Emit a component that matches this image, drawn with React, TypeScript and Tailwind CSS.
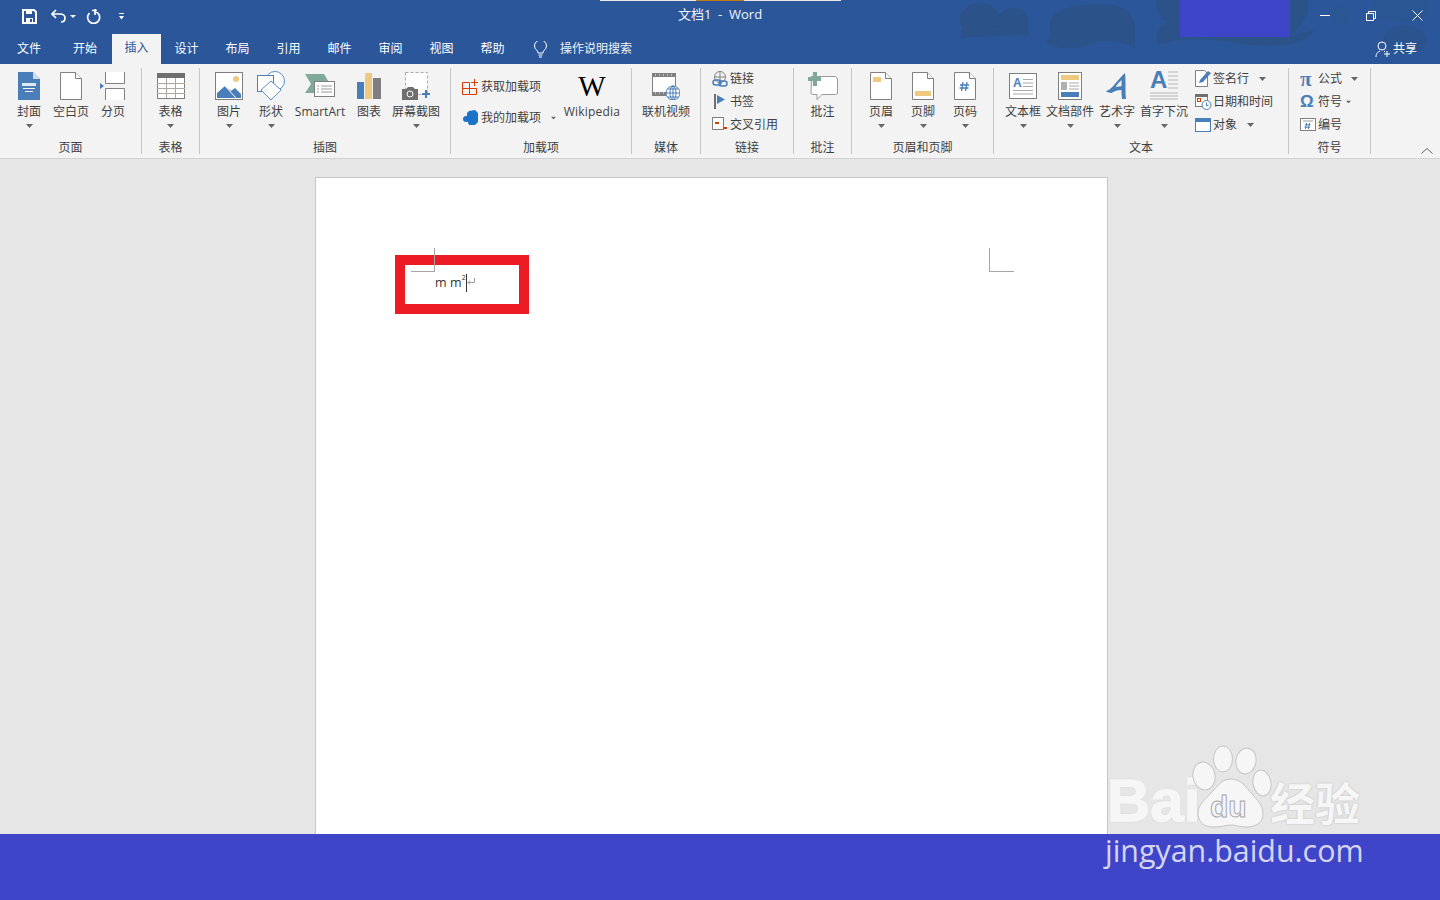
import type { ReactNode } from 'react';

const font = { fontFamily: '"Open Sans", "Noto Sans CJK SC", sans-serif' };

function Caret({ className = '' }: { className?: string }) {
  return (
    <svg width="7" height="4" viewBox="0 0 7 4" className={className}>
      <path d="M0 0h7L3.5 4z" fill="#666" />
    </svg>
  );
}

function Big({ w, icon, label, caret = true }: { w: string; icon: ReactNode; label: string; caret?: boolean }) {
  return (
    <div className={`${w} flex flex-col items-center shrink-0`}>
      <div className="h-[34px] mt-[5px] flex items-center justify-center">{icon}</div>
      <div className="h-[16px] leading-[16px] mt-[1px] whitespace-nowrap">{label}</div>
      {caret && <Caret className="mt-[4px]" />}
    </div>
  );
}

function Row({ icon, label, caret }: { icon: ReactNode; label: string; caret?: string }) {
  return (
    <div className="h-[23px] flex items-center whitespace-nowrap">
      <div className="w-[19px] flex justify-start pl-[1px] shrink-0">{icon}</div>
      <span>{label}</span>
      {caret && <Caret className={caret} />}
    </div>
  );
}

function Group({ w, label, children, pad = '' }: { w: string; label: string; children: ReactNode; pad?: string }) {
  return (
    <>
      <div className={`${w} h-[94px] flex flex-col shrink-0`}>
        <div className={`h-[72px] flex ${pad}`}>{children}</div>
        <div className="h-[18px] mt-[3px] leading-[18px] text-center">{label}</div>
      </div>
      <div className="w-px h-[86px] mt-[4px] bg-[#c6c6c6] shrink-0" />
    </>
  );
}

function Doc({ children, w = 22, h = 28 }: { children?: ReactNode; w?: number; h?: number }) {
  return (
    <svg width={w} height={h} viewBox="0 0 22 28">
      <path d="M.5.5h15l6 6v21H.5z" fill="#fff" stroke="#808080" />
      <path d="M15.5.5v6h6" fill="#fff" stroke="#808080" />
      {children}
    </svg>
  );
}

const CoverIcon = (
  <svg width="22" height="28" viewBox="0 0 22 28">
    <path d="M0 0h15l7 7v21H0z" fill="#4a7eb8" />
    <path d="M15 0v7h7z" fill="#cfdff0" />
    <path d="M4 11h14v3H4z" fill="#dfe9f5" />
    <path d="M5 16.500h12M7 19.500h8" stroke="#fff" />
  </svg>
);

const BreakIcon = (
  <svg width="26" height="28" viewBox="0 0 26 28">
    <path d="M5.500 0v11.500h19V0M5.500 28V16.500h19V28" fill="#fff" stroke="#808080" />
    <path d="M0 11l4 3-4 3z" fill="#4a7eb8" />
  </svg>
);

const TableIcon = (
  <svg width="28" height="26" viewBox="0 0 28 26">
    <rect x=".5" y=".5" width="27" height="25" fill="#fff" stroke="#7f7f7f" />
    <rect width="28" height="5" fill="#6f6f6f" />
    <path d="M0 10.500h28M0 15.500h28M0 20.500h28M9.500 5v20M18.500 5v20" stroke="#b0a79e" />
  </svg>
);

const PictureIcon = (
  <svg width="28" height="28" viewBox="0 0 28 28">
    <rect x=".5" y=".5" width="27" height="27" fill="#fff" stroke="#7f7f7f" />
    <circle cx="21" cy="7" r="3" fill="#efc97f" />
    <path d="M2 26V21l8-7 6 5 4-3 6 6v4z" fill="#4a7eb8" />
    <path d="M10 14l11 12" stroke="#fff" />
  </svg>
);

const ShapesIcon = (
  <svg width="30" height="30" viewBox="0 0 30 30">
    <circle cx="19" cy="10" r="9.500" fill="#fff" stroke="#5b8fc7" />
    <rect x="1.500" y="4.500" width="16" height="16" fill="#fff" stroke="#4a7eb8" />
    <path d="M15 10l10 9-10 10-10-10z" fill="#fff" stroke="#5b8fc7" />
  </svg>
);

const SmartArtIcon = (
  <svg width="30" height="26" viewBox="0 0 30 26">
    <path d="M0 1h19l6 10-6 9H0l6-9z" fill="#7faa99" />
    <rect x="9.500" y="8.500" width="20" height="15" fill="#fff" stroke="#7f7f7f" />
    <path d="M12 13h2M16 13h11M12 16h2M16 16h11M12 19h2M16 19h11" stroke="#999" />
  </svg>
);

const ChartIcon = (
  <svg width="24" height="26" viewBox="0 0 24 26">
    <rect y="9" width="7" height="17" fill="#4a7eb8" />
    <rect x="8" width="7" height="26" fill="#efc97f" />
    <rect x="16" y="5" width="8" height="21" fill="#7f7f7f" />
  </svg>
);

const ScreenshotIcon = (
  <svg width="28" height="28" viewBox="0 0 28 28">
    <rect x="3.500" y=".5" width="22" height="22" fill="#fff" stroke="#aaa" strokeDasharray="3 2" />
    <path d="M0 17h4l2-2h5l2 2h3v11H0z" fill="#6f6f6f" />
    <circle cx="8" cy="22" r="3" fill="#6f6f6f" stroke="#fff" />
    <path d="M24 18v8M20 22h8" stroke="#4a7eb8" strokeWidth="2" />
  </svg>
);

const StoreIcon = (
  <svg width="16" height="16" viewBox="0 0 16 16">
    <path d="M.5 3.500h7v12h-7zM.5 9.500h14v6h-7M7.500 9.500h7" fill="none" stroke="#d83b01" />
    <path d="M12.500 0v7M9 3.500h7" stroke="#d83b01" />
  </svg>
);

const MyAddinIcon = (
  <svg width="15" height="15" viewBox="0 0 15 15">
    <path d="M6 1l6-1 3 3v9l-3 3H6L4 10V3z" fill="#1a73c9" />
    <circle cx="3" cy="9" r="3" fill="#1a73c9" />
  </svg>
);

const VideoIcon = (
  <svg width="28" height="28" viewBox="0 0 28 28">
    <rect x=".5" y="1.500" width="23" height="22" fill="#fff" stroke="#808080" />
    <path d="M1 2h22v3H1zM1 20h22v3H1z" fill="#7f7f7f" />
    <path d="M3 3h1M7 3h1M11 3h1M15 3h1M19 3h1M3 21h1M7 21h1M11 21h1" stroke="#fff" />
    <circle cx="21" cy="21" r="7" fill="#fff" stroke="#4a7eb8" />
    <path d="M14 21h14M21 14v14M16 17h10M16 25h10" stroke="#4a7eb8" />
    <ellipse cx="21" cy="21" rx="3" ry="7" fill="none" stroke="#4a7eb8" />
  </svg>
);

const LinkIcon = (
  <svg width="16" height="16" viewBox="0 0 16 16">
    <circle cx="8" cy="6" r="5.500" fill="none" stroke="#808080" />
    <path d="M3 6h10M8 1v10" stroke="#808080" />
    <rect x="1" y="9" width="8" height="5" rx="2.500" fill="none" stroke="#4a7eb8" strokeWidth="1.500" />
    <rect x="7" y="10" width="8" height="5" rx="2.500" fill="none" stroke="#4a7eb8" strokeWidth="1.500" />
  </svg>
);

const BookmarkIcon = (
  <svg width="13" height="15" viewBox="0 0 13 15">
    <rect x="2" width="2" height="15" fill="#6f6f6f" />
    <path d="M5 1l8 4.500L5 10z" fill="#4a7eb8" />
  </svg>
);

const CrossRefIcon = (
  <svg width="16" height="15" viewBox="0 0 16 15">
    <rect x=".5" y=".5" width="11" height="12" fill="#fff" stroke="#808080" />
    <rect x="3" y="5" width="4" height="2" fill="#d83b01" />
    <rect x="11" y="10" width="4" height="2" fill="#d83b01" />
  </svg>
);

const CommentIcon = (
  <svg width="30" height="28" viewBox="0 0 30 28">
    <path d="M3.500 4.500h24l2 2v15l-2 1H14l-5 5v-5H5l-2-1z" fill="#fff" stroke="#999" />
    <path d="M5 0h4v5h4v4H9v5H5V9H0V5h5z" fill="#7faa99" />
  </svg>
);

const TextBoxIcon = (
  <div className="relative w-[28px] h-[26px] bg-white border border-[#7f7f7f]">
    <span className="absolute left-[3px] top-[3px] text-[12px] leading-[12px] font-bold text-[#4a7eb8]" style={{ fontFamily: '"Liberation Sans", sans-serif' }}>A</span>
    <svg className="absolute left-0 top-0" width="26" height="24" viewBox="0 0 26 24">
      <path d="M13 5.500h10M13 9h10M13 12.500h10M3 16.500h20M3 20h20" stroke="#aaa" />
    </svg>
  </div>
);

const PartsIcon = (
  <svg width="24" height="28" viewBox="0 0 24 28">
    <rect x=".5" y=".5" width="23" height="27" fill="#fff" stroke="#7f7f7f" />
    <rect x="3" y="3" width="18" height="5" fill="#efc97f" />
    <rect x="3" y="10" width="6" height="8" fill="#b0b0b0" />
    <path d="M11 11h10M11 14h10M11 17h10" stroke="#aaa" />
    <rect x="3" y="20" width="18" height="5" fill="#4a7eb8" />
  </svg>
);

const WordArtIcon = (
  <svg width="22" height="28" viewBox="0 0 22 28">
    <path d="M0 19C6 18 11 8 19 1c1 8 0 18 1 26l-4 0c-.5-3-.5-6-.5-9-4 0-7 1-10 3-2 0-4-1-6-2z" fill="#4a7eb8" />
    <path d="M15.500 8c-2.500 2-4.500 5-6 7 2-.5 4-.7 6-.7z" fill="#f3f3f3" />
  </svg>
);

const DropCapIcon = (
  <div className="relative w-[28px] h-[30px]">
    <span className="absolute left-0 top-[-3px] text-[24px] leading-[24px] font-bold text-[#4a7eb8]" style={{ fontFamily: '"Liberation Sans", sans-serif' }}>A</span>
    <svg className="absolute left-0 top-0" width="28" height="30" viewBox="0 0 28 30">
      <path d="M18 1h10M18 5h10M18 9h10M18 13h10M18 17h10M0 22h28M0 25h28M0 28h28" stroke="#b5b5b5" />
    </svg>
  </div>
);

const SignIcon = (
  <svg width="17" height="17" viewBox="0 0 17 17">
    <path d="M.5.5h9l3 3v13H.5z" fill="#fff" stroke="#808080" />
    <path d="M4 13l1-3 8-9 3 2-8 9z" fill="#4a7eb8" />
  </svg>
);

const DateIcon = (
  <svg width="17" height="16" viewBox="0 0 17 16">
    <rect x=".5" y=".5" width="12" height="12" fill="#fff" stroke="#808080" />
    <rect width="13" height="3" fill="#6f6f6f" />
    <rect x="2.500" y="4.500" width="3" height="3" fill="none" stroke="#d83b01" />
    <circle cx="11.500" cy="11" r="4.500" fill="#fff" stroke="#4a7eb8" />
    <path d="M11.500 8.500v3h2" fill="none" stroke="#4a7eb8" />
  </svg>
);

const ObjectIcon = (
  <svg width="16" height="14" viewBox="0 0 16 14">
    <rect x=".5" y=".5" width="15" height="13" fill="#fff" stroke="#4a7eb8" />
    <rect width="16" height="4" fill="#4a7eb8" />
  </svg>
);

const NumberIcon = (
  <svg width="16" height="13" viewBox="0 0 16 13">
    <rect x=".5" y=".5" width="15" height="12" fill="#fff" stroke="#808080" />
    <path d="M3 3h10" stroke="#999" />
    <path d="M6.500 5l-1 6M9.500 5l-1 6M5 6.800h5.500M4.500 9.200h5.500" stroke="#4a7eb8" />
  </svg>
);

function Blotches() {
  return (
    <svg className="absolute left-[940px] top-0" width="500" height="64" viewBox="940 0 500 64">
      <g fill="#2b5389">
        <ellipse cx="980" cy="20" rx="20" ry="17" />
        <ellipse cx="1013" cy="22" rx="16" ry="14" />
        <path d="M961 30h68v5c-20 1-50 1-68 3z" />
        <path d="M1050 22C1052 10 1075 4 1100 4c25-1 35 11 35 24v20c-13-8-35-8-40-6-15 8-40 8-50 0l5-4z" />
        <path d="M1156 0c-1 12 6 20 12 22-10 4-13 13-11 23 23-7 43-7 73-3 30 6 70 8 86-12 2-2-16 4-26 6 15-11 20-26 18-36z" />
      </g>
      <g fill="#2b5694">
        <ellipse cx="1342" cy="15" rx="10" ry="9" />
        <ellipse cx="1400" cy="8" rx="30" ry="14" />
      </g>
      <ellipse cx="1405" cy="40" rx="22" ry="14" fill="#2b548e" />
    </svg>
  );
}

function Watermark() {
  return (
    <div className="absolute left-[1104px] top-[744px] w-[262px] h-[130px]">
      <div
        className="absolute left-[3px] top-[27px] text-[60px] leading-[60px] font-bold text-[#f6f6f6] [-webkit-text-stroke:1.5px_#f6f6f6] [text-shadow:0_0_2px_#b5b5b5]"
        style={{ fontFamily: '"Liberation Sans", sans-serif' }}
      >
        Bai
      </div>
      <svg className="absolute left-[86px] top-0" width="86" height="86" viewBox="0 0 86 86">
        <g fill="#f6f6f6" stroke="#c4c4c4" strokeWidth="1">
          <ellipse cx="14" cy="32" rx="11" ry="14" transform="rotate(-12 14 32)" />
          <ellipse cx="33" cy="15" rx="9.500" ry="13" />
          <ellipse cx="56" cy="17" rx="10" ry="13" transform="rotate(10 56 17)" />
          <ellipse cx="72" cy="39" rx="9" ry="13" transform="rotate(-10 72 39)" />
          <path d="M41 35c10 0 15 8 21 15 5 6 11 10 11 20 0 10-9 13-16 13-8 0-12-2-16-2s-9 2-18 2c-9 0-15-5-15-14 0-9 8-14 13-20 6-6 10-14 20-14z" />
        </g>
        <text x="20" y="73" fontSize="30" fontWeight="700" fill="#f6f6f6" stroke="#a8a8a8" fontFamily="Liberation Sans">du</text>
      </svg>
      <div
        className="absolute left-[166px] top-[31px] text-[45px] leading-[54px] font-bold text-[#f6f6f6] whitespace-nowrap [text-shadow:0_0_2px_#b5b5b5]"
        style={{ fontFamily: '"Noto Sans CJK SC", sans-serif' }}
      >
        经验
      </div>
      <div
        className="absolute left-[1px] top-[87px] text-[30.4px] leading-[40px] text-[#d5d5f2] whitespace-nowrap"
        style={{ fontFamily: '"Open Sans", sans-serif' }}
      >
        jingyan.baidu.com
      </div>
    </div>
  );
}

const tabs = [
  ['文件', 'w-[58px]'],
  ['开始', 'w-[54px]'],
];
const tabsAfter = ['设计', '布局', '引用', '邮件', '审阅', '视图', '帮助'];

export default function App() {
  return (
    <div className="relative h-[900px] w-[1440px] overflow-hidden flex flex-col bg-[#e6e6e6] text-[12px] text-[#3f3f3f]" style={font}>
      <header className="relative h-[64px] bg-[#2b579a] text-white shrink-0">
        <Blotches />
        <div className="absolute left-[600px] top-0 w-[241px] h-px bg-[#e8e8e8]" />
        <div className="absolute left-[696px] top-0 w-[48px] h-px bg-[#c77a1a]" />
        <div className="absolute left-[1180px] top-0 w-[110px] h-[37px] bg-[#3f45c9]" />

        <div className="relative h-[34px] grid grid-cols-[1fr_auto_1fr] items-center">
          <div className="flex items-center pl-[22px] pb-[2px]">
            <svg width="15" height="15" viewBox="0 0 15 15">
              <path d="M1 1h11l2 2v11H1z" fill="none" stroke="#fff" strokeWidth="2" />
              <path d="M4 1h6v4H4zM4 9h7v5H4z" fill="#fff" />
              <path d="M8 10h2v3H8z" fill="#2b579a" />
            </svg>
            <svg className="ml-[14px]" width="15" height="14" viewBox="0 0 15 14">
              <path d="M5 1L1 5l4 4M1 5h8c3 0 5 2 5 4s-1 4-4 4" fill="none" stroke="#fff" strokeWidth="1.700" />
            </svg>
            <svg className="ml-[4px]" width="6" height="3" viewBox="0 0 6 3">
              <path d="M0 0h6L3 3z" fill="#fff" />
            </svg>
            <svg className="ml-[10px]" width="15" height="15" viewBox="0 0 15 15">
              <path d="M9 2.500A6 6 0 1 1 3.500 4M9 0v6" fill="none" stroke="#fff" strokeWidth="1.700" />
              <path d="M6 1.500h5" stroke="#fff" strokeWidth="1.500" />
            </svg>
            <svg className="ml-[18px]" width="5" height="7" viewBox="0 0 5 7">
              <path d="M0 .5h5" stroke="#fff" />
              <path d="M0 3h5L2.500 6.500z" fill="#fff" />
            </svg>
          </div>
          <div className="whitespace-pre pb-[5px] text-[13px] text-[#f2f5fa]">文档1  -  Word</div>
          <div className="flex justify-end items-center pb-[3px]">
            <div className="w-[46px] flex justify-center">
              <svg width="10" height="1"><rect width="10" height="1" fill="#fff" /></svg>
            </div>
            <div className="w-[46px] flex justify-center">
              <svg width="10" height="10" viewBox="0 0 10 10">
                <path d="M.5 2.500h7v7h-7zM2.500 2.500v-2h7v7h-2" fill="none" stroke="#fff" />
              </svg>
            </div>
            <div className="w-[46px] flex justify-center">
              <svg width="11" height="11" viewBox="0 0 11 11">
                <path d="M.5.5l10 10M10.500.5l-10 10" stroke="#fff" />
              </svg>
            </div>
          </div>
        </div>

        <nav className="relative h-[30px] flex items-center">
          {tabs.map(([t, w]) => (
            <div key={t} className={`${w} text-center`}>{t}</div>
          ))}
          <div className="w-[49px] h-[30px] leading-[28px] bg-[#f3f3f3] text-[#2b579a] text-center">插入</div>
          {tabsAfter.map((t) => (
            <div key={t} className="w-[51px] text-center">{t}</div>
          ))}
          <svg className="ml-[16px]" width="13" height="17" viewBox="0 0 13 17">
            <path d="M4 12c0-3-3.500-3.500-3.500-7a6 6 0 0 1 12 0c0 3.500-3.500 4-3.500 7zM4.500 14h4M5 16h3" fill="none" stroke="#fff" />
          </svg>
          <span className="ml-[13px] text-[#f0f3f8]">操作说明搜索</span>
          <div className="ml-auto mr-[23px] flex items-center">
            <svg width="16" height="16" viewBox="0 0 16 16">
              <circle cx="7" cy="5" r="4" fill="none" stroke="#fff" />
              <path d="M1 16c0-4 2-5 4-6M9 10l1 1M12 10v6M9 13h6" fill="none" stroke="#fff" />
            </svg>
            <span className="ml-[2px]">共享</span>
          </div>
        </nav>
      </header>

      <section className="relative h-[95px] bg-[#f3f3f3] border-b border-[#d2d2d2] flex shrink-0">
        <Group w="w-[141px]" label="页面" pad="pl-[8px]">
          <Big w="w-[42px]" icon={CoverIcon} label="封面" />
          <Big w="w-[42px]" icon={<Doc />} label="空白页" caret={false} />
          <Big w="w-[42px]" icon={BreakIcon} label="分页" caret={false} />
        </Group>
        <Group w="w-[57px]" label="表格">
          <Big w="w-[57px]" icon={TableIcon} label="表格" />
        </Group>
        <Group w="w-[250px]" label="插图" pad="pl-[8px]">
          <Big w="w-[42px]" icon={PictureIcon} label="图片" />
          <Big w="w-[42px]" icon={ShapesIcon} label="形状" />
          <Big w="w-[56px]" icon={SmartArtIcon} label="SmartArt" caret={false} />
          <Big w="w-[42px]" icon={ChartIcon} label="图表" caret={false} />
          <Big w="w-[52px]" icon={ScreenshotIcon} label="屏幕截图" />
        </Group>
        <Group w="w-[180px]" label="加载项" pad="pl-[11px]">
          <div className="w-[101px] pt-[11px] shrink-0">
            <div className="h-[23px] flex items-center whitespace-nowrap">
              <div className="w-[19px] shrink-0">{StoreIcon}</div>
              <span>获取加载项</span>
            </div>
            <div className="h-[23px] mt-[8px] flex items-center whitespace-nowrap">
              <div className="w-[19px] shrink-0 pl-[1px]">{MyAddinIcon}</div>
              <span>我的加载项</span>
              <Caret className="ml-[9px] scale-75" />
            </div>
          </div>
          <div className="w-[58px] flex flex-col items-center">
            <div className="h-[34px] mt-[5px] text-[29px] leading-[34px] text-black" style={{ fontFamily: '"Liberation Serif", serif' }}>W</div>
            <div className="mt-[1px] h-[16px] leading-[16px] tracking-[0.2px]">Wikipedia</div>
          </div>
        </Group>
        <Group w="w-[68px]" label="媒体">
          <Big w="w-[68px]" icon={VideoIcon} label="联机视频" caret={false} />
        </Group>
        <Group w="w-[92px]" label="链接" pad="pl-[10px] pt-[3px] flex-col">
          <Row icon={LinkIcon} label="链接" />
          <Row icon={BookmarkIcon} label="书签" />
          <Row icon={CrossRefIcon} label="交叉引用" />
        </Group>
        <Group w="w-[57px]" label="批注">
          <Big w="w-[57px]" icon={CommentIcon} label="批注" caret={false} />
        </Group>
        <Group w="w-[141px]" label="页眉和页脚" pad="pl-[8px]">
          <Big w="w-[42px]" icon={<Doc><rect x="3" y="5" width="8" height="5" fill="#efc97f" /></Doc>} label="页眉" />
          <Big w="w-[42px]" icon={<Doc><rect x="3" y="19" width="16" height="5" fill="#efc97f" /></Doc>} label="页脚" />
          <Big
            w="w-[42px]"
            icon={
              <Doc>
                <path d="M9 10l-1.500 9M13 10l-1.500 9M6 13h9M5.500 16h9" stroke="#4a7eb8" strokeWidth="1.300" />
              </Doc>
            }
            label="页码"
          />
        </Group>
        <Group w="w-[294px]" label="文本" pad="pl-[7px]">
          <Big w="w-[44px]" icon={TextBoxIcon} label="文本框" />
          <Big w="w-[50px]" icon={PartsIcon} label="文档部件" />
          <Big w="w-[44px]" icon={WordArtIcon} label="艺术字" />
          <Big w="w-[50px]" icon={DropCapIcon} label="首字下沉" />
          <div className="pt-[3px] ml-[5px]">
            <Row icon={SignIcon} label="签名行" caret="ml-[10px]" />
            <Row icon={DateIcon} label="日期和时间" />
            <Row icon={ObjectIcon} label="对象" caret="ml-[10px]" />
          </div>
        </Group>
        <Group w="w-[81px]" label="符号" pad="pl-[10px] pt-[3px] flex-col">
          <Row icon={<span className="text-[21px] leading-[20px] font-bold text-[#4a7eb8]" style={{ fontFamily: '"Liberation Serif", serif' }}>π</span>} label="公式" caret="ml-[9px]" />
          <Row icon={<span className="text-[17px] leading-[20px] font-bold text-[#4a7eb8]" style={{ fontFamily: '"Liberation Sans", sans-serif' }}>Ω</span>} label="符号" caret="ml-[3px] scale-75" />
          <Row icon={NumberIcon} label="编号" />
        </Group>
        <svg className="absolute left-[1421px] top-[84px]" width="12" height="6" viewBox="0 0 12 6">
          <path d="M.5 5.500L6 .5l5.500 5" fill="none" stroke="#666" />
        </svg>
      </section>

      <main className="flex-1 min-h-0 overflow-hidden pl-[315px] pt-[18px]">
        <div className="relative w-[793px] h-full bg-white border border-b-0 border-[#c6c6c6] pl-[119px] pt-[96px]">
          <div className="flex items-center h-[18px] text-[12.5px] leading-[18px] text-[#333]">
            <span>m</span>
            <span className="ml-[3.5px]">m</span>
            <sup className="text-[7px] leading-none -mt-[5px]">2</sup>
            <span className="w-px h-[18px] bg-[#333]" />
            <svg width="8" height="8" viewBox="0 0 8 8" className="-mt-[3px]">
              <path d="M7.500 0v4.500H1M3 2.500l-2 2 2 2" fill="none" stroke="#999" />
            </svg>
          </div>
          <div className="absolute left-[79px] top-[77px] w-[134px] h-[59px] border-[10px] border-[#ed1c24]" />
          <div className="absolute left-[95px] top-[70px] w-[24px] h-[24px] border-r border-b border-[#a6a6a6]" />
          <div className="absolute left-[673px] top-[70px] w-[25px] h-[24px] border-l border-b border-[#a6a6a6]" />
        </div>
      </main>

      <footer className="h-[66px] bg-[#3f45c9] shrink-0" />
      <Watermark />
    </div>
  );
}
